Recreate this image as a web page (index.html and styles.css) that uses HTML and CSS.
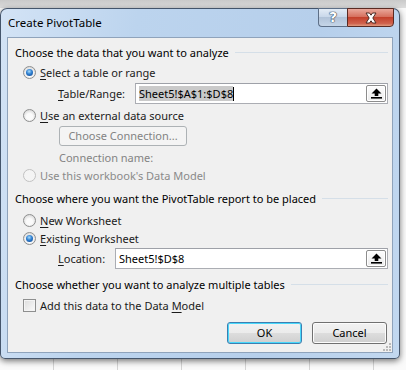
FILE: index.html
```html
<!DOCTYPE html>
<html lang="en">
<head>
    <meta charset="UTF-8">
    <title>Create PivotTable</title>
    <link rel="stylesheet" href="styles.css">
</head>
<body>
    <div class="window">
        <div class="titlebar">
            <div class="caption">Create PivotTable</div>
            <div class="cap-help">?</div>
            <div class="cap-close">
                <svg width="20" height="12" viewBox="0 0 20 12">
                    <path d="M5 1h3.5l1.5 2.2 1.5-2.2H15l-3.2 5 3.2 5h-3.5L10 8.8 8.5 11H5l3.2-5z" fill="#fff" stroke="#4a2a24" stroke-width="1" stroke-linejoin="round"/>
                </svg>
            </div>
        </div>
        <div class="client">
            <div class="group g1"><span>Choose the data that you want to analyze</span><i class="rule"></i></div>
            <div class="opt r1"><span class="radio on"></span><span><u>S</u>elect a table or range</span></div>
            <div class="field f1">
                <div class="lab lab1"><u>T</u>able/Range:</div>
                <div class="input">
                    <span class="sel">Sheet5!$A$1:$D$8</span><span class="caret"></span>
                    <span class="pick"><svg width="13" height="11" viewBox="0 0 13 11"><path d="M6.5 0.5 1.5 5.5h3.2V8h3.6V5.5h3.2z" fill="#000"/><rect x="1" y="9" width="11" height="1.6" fill="#000"/></svg></span>
                </div>
            </div>
            <div class="opt r2"><span class="radio"></span><span><u>U</u>se an external data source</span></div>
            <div class="connbtn">Choose Connection...</div>
            <div class="connname">Connection name:</div>
            <div class="opt off"><span class="radio"></span><span>Use this workbook's Data Model</span></div>
            <div class="group g2"><span>Choose where you want the PivotTable report to be placed</span><i class="rule"></i></div>
            <div class="opt r4"><span class="radio"></span><span><u>N</u>ew Worksheet</span></div>
            <div class="opt"><span class="radio on"></span><span><u>E</u>xisting Worksheet</span></div>
            <div class="field f2">
                <div class="lab lab2"><u>L</u>ocation:</div>
                <div class="input">
                    <span class="val">Sheet5!$D$8</span>
                    <span class="pick"><svg width="13" height="11" viewBox="0 0 13 11"><path d="M6.5 0.5 1.5 5.5h3.2V8h3.6V5.5h3.2z" fill="#000"/><rect x="1" y="9" width="11" height="1.6" fill="#000"/></svg></span>
                </div>
            </div>
            <div class="group g3"><span>Choose whether you want to analyze multiple tables</span><i class="rule"></i></div>
            <div class="opt c1"><span class="check"></span><span>Add this data to the Data <u>M</u>odel</span></div>
            <div class="actions">
                <div class="btn ok">OK</div>
                <div class="btn">Cancel</div>
            </div>
            <svg class="grip" width="8" height="8" viewBox="0 0 8 8">
                <g fill="#b9b9b9">
                    <rect x="6" y="0" width="2" height="2"/>
                    <rect x="3" y="3" width="2" height="2"/><rect x="6" y="3" width="2" height="2"/>
                    <rect x="0" y="6" width="2" height="2"/><rect x="3" y="6" width="2" height="2"/><rect x="6" y="6" width="2" height="2"/>
                </g>
            </svg>
        </div>
    </div>
</body>
</html>
```

FILE: styles.css
```css
*{
    margin: 0;
    padding: 0;
    box-sizing: border-box;
}
html,body{
    width: 406px;
    height: 370px;
    overflow: hidden;
}
body{
    font-family: "Noto Sans", "Open Sans", sans-serif;
    font-size: 11px;
    color: #1b1b1b;
    background:
        linear-gradient(#c9c9c9, #dedede) 0 0 / 100% 8px no-repeat,
        repeating-linear-gradient(to right, transparent 0 53px, #d4d4d4 53px 54px, transparent 54px 64px) -0px 0,
        #fafafa;
}
.window{
    width: 400px;
    height: 351px;
    margin-top: 8px;
    border: 1px solid rgba(38, 52, 74, .8);
    border-radius: 7px 7px 5px 5px;
    background: linear-gradient(100deg, #d3e3f5 0%, #bcd4ee 30%, #b6cfeb 70%, #c2d8f0 100%);
    box-shadow: 0 2px 6px rgba(0, 0, 0, .55);
    display: flex;
    flex-direction: column;
}
.titlebar{
    height: 28px;
    display: flex;
    align-items: flex-start;
    padding-left: 7px;
    padding-right: 5px;
}
.caption{
    flex: 1;
    line-height: 26px;
    color: #000;
    font-size: 11.5px;
    padding-top: 1px;
}
.cap-help{
    width: 29px;
    height: 19px;
    margin-top: -1px;
    border: 1px solid #5d6f87;
    border-right: none;
    border-radius: 0 0 0 4px;
    background: linear-gradient(#e3ecf6, #c9d8ea 45%, #b1c3d9 50%, #c5d5e7);
    text-align: center;
    font-family: "DejaVu Sans", sans-serif;
    font-weight: bold;
    font-size: 14px;
    line-height: 17px;
    color: #fff;
    text-shadow: 0 0 1px #2b3a4e, 0 0 1px #2b3a4e, 0 0 1px #2b3a4e;
}
.cap-close{
    width: 47px;
    height: 19px;
    margin-top: -1px;
    border: 1px solid #5a2a22;
    border-radius: 0 0 4px 0;
    background: linear-gradient(#e9a89b, #d6715f 45%, #c3412c 50%, #d0624d 85%, #e09a7e);
    display: flex;
    justify-content: center;
    align-items: center;
}
.client{
    position: relative;
    flex: 1;
    margin: 0 6px 5px 6px;
    border: 1px solid #8fa3bb;
    background: #f0f0f0;
    padding-right: 4px;
}
u{
    text-decoration: underline;
    text-underline-offset: 2px;
}
.group{
    height: 16px;
    display: flex;
    align-items: center;
    padding-left: 7px;
    color: #000;
}
.g1{ margin-top: 6px; }
.g2{ margin-top: 6px; }
.g3{ margin-top: 7px; }
.rule{
    flex: 1;
    height: 1px;
    margin-left: 6px;
    background: #d5dfe8;
}
.opt{
    height: 18px;
    display: flex;
    align-items: center;
    padding-left: 15px;
    gap: 4px;
}
.r1{ margin-top: 3px; }
.r2{ margin-top: 2px; }
.r4{ margin-top: 5px; }
.c1{ margin-top: 4px; }
.off{ color: #8a8a8a; }
.radio{
    width: 13px;
    height: 13px;
    border-radius: 50%;
    border: 1px solid #8e8f8f;
    background: radial-gradient(circle at 50% 60%, #fbfbfb 0 35%, #dcdcdc 75%);
    display: flex;
    justify-content: center;
    align-items: center;
}
.radio.on::after{
    content: "";
    width: 7px;
    height: 7px;
    border-radius: 50%;
    background: radial-gradient(circle at 45% 35%, #a8dcfb 0, #2f7fd0 45%, #0d3f86 100%);
}
.off .radio{
    border-color: #c2c2c2;
    background: #f4f4f4;
}
.check{
    width: 13px;
    height: 13px;
    border: 1px solid #8e8f8f;
    background: linear-gradient(135deg, #dcdcdc, #fbfbfb);
    box-shadow: inset 0 0 0 1px #f4f4f4;
}
.field{
    height: 21px;
    display: flex;
    align-items: center;
    padding-left: 50px;
}
.f1{ margin-top: 2px; }
.f2{ margin-top: 1px; }
.lab1{ width: 77px; }
.lab2{ width: 57px; }
.input{
    flex: 1;
    height: 21px;
    border: 1px solid #abadb3;
    border-top-color: #9ea1a8;
    background: #fff;
    display: flex;
    align-items: center;
    padding-left: 3px;
    padding-right: 1px;
    color: #000;
}
.sel{
    background: #cacaca;
    line-height: 15px;
}
.caret{
    width: 1px;
    height: 14px;
    background: #000;
}
.val{
    line-height: 15px;
}
.pick{
    margin-left: auto;
    width: 20px;
    height: 17px;
    border: 1px solid #8d8d8d;
    border-radius: 2px;
    background: linear-gradient(#fdfdfd, #ececec);
    box-shadow: inset 0 0 0 1px #fff;
    display: flex;
    justify-content: center;
    align-items: center;
}
.connbtn{
    width: 128px;
    height: 20px;
    margin: 2px 0 0 51px;
    border: 1px solid #adb2b5;
    border-radius: 3px;
    background: #f4f4f4;
    color: #838383;
    text-align: center;
    line-height: 18px;
}
.connname{
    height: 16px;
    line-height: 16px;
    margin-top: 4px;
    padding-left: 51px;
    color: #838383;
}
.actions{
    display: flex;
    justify-content: flex-end;
    gap: 10px;
    margin-top: 8px;
    padding-right: 1px;
}
.btn{
    width: 75px;
    height: 22px;
    border: 1px solid #707070;
    border-radius: 3px;
    background: linear-gradient(#f2f2f2 0, #ebebeb 50%, #dddddd 50%, #cfcfcf 100%);
    box-shadow: inset 0 0 0 1px #fcfcfc;
    text-align: center;
    line-height: 20px;
    color: #000;
}
.btn.ok{
    border-color: #3c7fb1;
    box-shadow: inset 0 0 0 1px #48d8fb;
}
.grip{
    position: absolute;
    right: 1px;
    bottom: 1px;
}
```
